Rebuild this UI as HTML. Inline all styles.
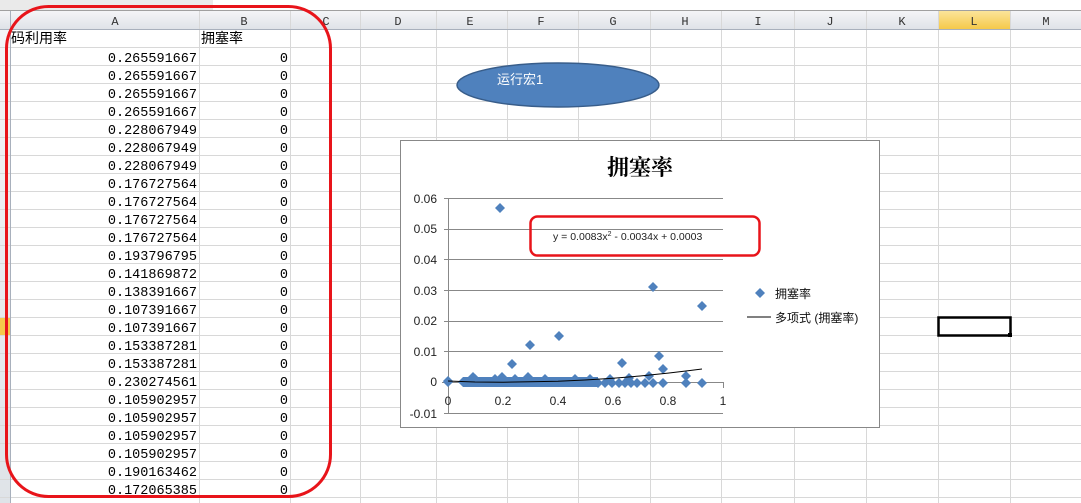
<!DOCTYPE html>
<html><head><meta charset="utf-8"><style>
html,body{margin:0;padding:0;background:#fff;width:1081px;height:503px;overflow:hidden}
svg text{font-family:"Liberation Sans","Noto Sans CJK SC",sans-serif}
svg .m text{font-family:"Liberation Mono","Noto Sans CJK SC",monospace;font-size:13.5px;fill:#000}
svg .h text{font-family:"Liberation Mono",monospace;font-size:12px;fill:#333}
</style></head><body>
<svg width="1081" height="503" viewBox="0 0 1081 503" xmlns="http://www.w3.org/2000/svg">
<defs>
<linearGradient id="hg" x1="0" y1="0" x2="0" y2="1"><stop offset="0" stop-color="#f4f5f7"/><stop offset="1" stop-color="#dfe3e8"/></linearGradient>
<linearGradient id="yg" x1="0" y1="0" x2="0" y2="1"><stop offset="0" stop-color="#fbe49a"/><stop offset="1" stop-color="#f5c94a"/></linearGradient>
<symbol id="d" viewBox="-5 -5 10 10"><path d="M0-5L5 0L0 5L-5 0Z" fill="#4f81bd"/></symbol>
</defs>
<rect x="0" y="0" width="213" height="10" fill="#eaeaea"/>
<line x1="0" y1="10.5" x2="1081" y2="10.5" stroke="#a0a0a0"/>
<rect x="0" y="11" width="1081" height="18" fill="url(#hg)"/>
<rect x="938" y="11" width="72" height="18" fill="url(#yg)"/>
<rect x="0" y="29" width="10" height="474" fill="url(#hg)"/>
<rect x="0" y="317" width="10" height="18" fill="#f5c94a"/>
<g stroke="#d8d8d8" stroke-width="1">
<path d="M0 47.5H1081M0 65.5H1081M0 83.5H1081M0 101.5H1081M0 119.5H1081M0 137.5H1081M0 155.5H1081M0 173.5H1081M0 191.5H1081M0 209.5H1081M0 227.5H1081M0 245.5H1081M0 263.5H1081M0 281.5H1081M0 299.5H1081M0 317.5H1081M0 335.5H1081M0 353.5H1081M0 371.5H1081M0 389.5H1081M0 407.5H1081M0 425.5H1081M0 443.5H1081M0 461.5H1081M0 479.5H1081M0 497.5H1081"/>
<path d="M199.5 11V503M290.5 11V503M360.5 11V503M436.5 11V503M507.5 11V503M578.5 11V503M650.5 11V503M721.5 11V503M794.5 11V503M866.5 11V503M938.5 11V503M1010.5 11V503"/>
</g>
<line x1="10.5" y1="11" x2="10.5" y2="503" stroke="#a8b0bc"/>
<line x1="0" y1="29.5" x2="1081" y2="29.5" stroke="#a8b0bc"/>
<g class="h" text-anchor="middle">
<text x="115" y="25">A</text><text x="244" y="25">B</text><text x="326" y="25">C</text><text x="398" y="25">D</text><text x="470" y="25">E</text><text x="541" y="25">F</text><text x="613" y="25">G</text><text x="685" y="25">H</text><text x="758" y="25">I</text><text x="830" y="25">J</text><text x="902" y="25">K</text><text x="974" y="25">L</text><text x="1046" y="25">M</text>
</g>
<text x="11" y="43" style="font-size:14px">码利用率</text>
<text x="201" y="43" style="font-size:14px">拥塞率</text>
<g class="m" text-anchor="end">
<text x="197" y="62">0.265591667</text><text x="197" y="80">0.265591667</text><text x="197" y="98">0.265591667</text><text x="197" y="116">0.265591667</text><text x="197" y="134">0.228067949</text><text x="197" y="152">0.228067949</text><text x="197" y="170">0.228067949</text><text x="197" y="188">0.176727564</text><text x="197" y="206">0.176727564</text><text x="197" y="224">0.176727564</text><text x="197" y="242">0.176727564</text><text x="197" y="260">0.193796795</text><text x="197" y="278">0.141869872</text><text x="197" y="296">0.138391667</text><text x="197" y="314">0.107391667</text><text x="197" y="332">0.107391667</text><text x="197" y="350">0.153387281</text><text x="197" y="368">0.153387281</text><text x="197" y="386">0.230274561</text><text x="197" y="404">0.105902957</text><text x="197" y="422">0.105902957</text><text x="197" y="440">0.105902957</text><text x="197" y="458">0.105902957</text><text x="197" y="476">0.190163462</text><text x="197" y="494">0.172065385</text>
</g>
<g class="m" text-anchor="end">
<text x="288" y="62">0</text><text x="288" y="80">0</text><text x="288" y="98">0</text><text x="288" y="116">0</text><text x="288" y="134">0</text><text x="288" y="152">0</text><text x="288" y="170">0</text><text x="288" y="188">0</text><text x="288" y="206">0</text><text x="288" y="224">0</text><text x="288" y="242">0</text><text x="288" y="260">0</text><text x="288" y="278">0</text><text x="288" y="296">0</text><text x="288" y="314">0</text><text x="288" y="332">0</text><text x="288" y="350">0</text><text x="288" y="368">0</text><text x="288" y="386">0</text><text x="288" y="404">0</text><text x="288" y="422">0</text><text x="288" y="440">0</text><text x="288" y="458">0</text><text x="288" y="476">0</text><text x="288" y="494">0</text>
</g>
<rect x="938.5" y="317.5" width="72" height="18" fill="none" stroke="#000" stroke-width="2.5"/>
<rect x="1008" y="333" width="4" height="4" fill="#000"/>
<ellipse cx="558" cy="85" rx="101" ry="22" fill="#4f81bd" stroke="#385d8a" stroke-width="1.5"/>
<text x="497" y="84" fill="#fff" style="font-size:13px">运行宏1</text>
<rect x="400.5" y="140.5" width="479" height="287" fill="#fff" stroke="#888"/>
<text x="640" y="175" text-anchor="middle" style="font-size:22px;font-weight:bold;font-family:'Noto Serif CJK SC','Noto Sans CJK SC',serif">拥塞率</text>
<g stroke="#888" stroke-width="1">
<path d="M448 198.5H723M448 229.5H723M448 259.5H723M448 290.5H723M448 321.5H723M448 351.5H723M448 413.5H723"/>
<path d="M448.5 198V413M442 382.5H723M723.5 382V388M448 198.5H444M448 229.5H444M448 259.5H444M448 290.5H444M448 321.5H444M448 351.5H444M448 413.5H444"/>
</g>
<g font-size="12" fill="#222" text-anchor="end">
<text x="437" y="203">0.06</text><text x="437" y="233">0.05</text><text x="437" y="264">0.04</text><text x="437" y="295">0.03</text><text x="437" y="325">0.02</text><text x="437" y="356">0.01</text><text x="437" y="386">0</text><text x="437" y="418">-0.01</text>
</g>
<g font-size="12" fill="#222" text-anchor="middle">
<text x="448" y="405">0</text><text x="503" y="405">0.2</text><text x="558" y="405">0.4</text><text x="613" y="405">0.6</text><text x="668" y="405">0.8</text><text x="723" y="405">1</text>
</g>
<rect x="463" y="377" width="135" height="10" fill="#4f81bd"/>
<g>
<use href="#d" x="443" y="376" width="10" height="10"/><use href="#d" x="443" y="377" width="10" height="10"/>
<use href="#d" x="495" y="203" width="10" height="10"/><use href="#d" x="525" y="340" width="10" height="10"/><use href="#d" x="554" y="331" width="10" height="10"/><use href="#d" x="507" y="359" width="10" height="10"/><use href="#d" x="648" y="282" width="10" height="10"/><use href="#d" x="697" y="301" width="10" height="10"/><use href="#d" x="617" y="358" width="10" height="10"/><use href="#d" x="654" y="351" width="10" height="10"/><use href="#d" x="658" y="364" width="10" height="10"/><use href="#d" x="681" y="371" width="10" height="10"/><use href="#d" x="681" y="378" width="10" height="10"/><use href="#d" x="697" y="378" width="10" height="10"/><use href="#d" x="658" y="378" width="10" height="10"/><use href="#d" x="644" y="371" width="10" height="10"/><use href="#d" x="523" y="372" width="10" height="10"/><use href="#d" x="468" y="372" width="10" height="10"/><use href="#d" x="497" y="372" width="10" height="10"/>
<use href="#d" x="458" y="377" width="10" height="10"/><use href="#d" x="593" y="378" width="10" height="10"/><use href="#d" x="600" y="378" width="10" height="10"/><use href="#d" x="607" y="378" width="10" height="10"/><use href="#d" x="614" y="378" width="10" height="10"/><use href="#d" x="620" y="378" width="10" height="10"/><use href="#d" x="626" y="378" width="10" height="10"/><use href="#d" x="632" y="378" width="10" height="10"/><use href="#d" x="640" y="378" width="10" height="10"/><use href="#d" x="648" y="378" width="10" height="10"/><use href="#d" x="624" y="373" width="10" height="10"/><use href="#d" x="605" y="374" width="10" height="10"/>
<use href="#d" x="470" y="374" width="10" height="10"/><use href="#d" x="490" y="374" width="10" height="10"/><use href="#d" x="510" y="374" width="10" height="10"/><use href="#d" x="540" y="374" width="10" height="10"/><use href="#d" x="570" y="374" width="10" height="10"/><use href="#d" x="585" y="374" width="10" height="10"/>
</g>
<polyline points="448,381 475,382 503,382.2 530,381.8 558,381.2 585,380 613,378.2 640,376 668,373.1 690,370.5 702,369" fill="none" stroke="#000" stroke-width="1"/>
<rect x="530.5" y="216.5" width="229" height="39" rx="7" fill="none" stroke="#e8141a" stroke-width="2.5"/>
<text x="553" y="240" font-size="10.5" fill="#222">y = 0.0083x<tspan font-size="7" dy="-4">2</tspan><tspan dy="4"> - 0.0034x + 0.0003</tspan></text>
<use href="#d" x="755" y="288" width="10" height="10"/>
<text x="775" y="298" font-size="12" fill="#111">拥塞率</text>
<line x1="747" y1="317" x2="771" y2="317" stroke="#000"/>
<text x="775" y="322" font-size="12" fill="#111">多项式 (拥塞率)</text>
<rect x="6.5" y="6.5" width="324" height="490" rx="42" fill="none" stroke="#e8141a" stroke-width="3"/>
</svg>
</body></html>
